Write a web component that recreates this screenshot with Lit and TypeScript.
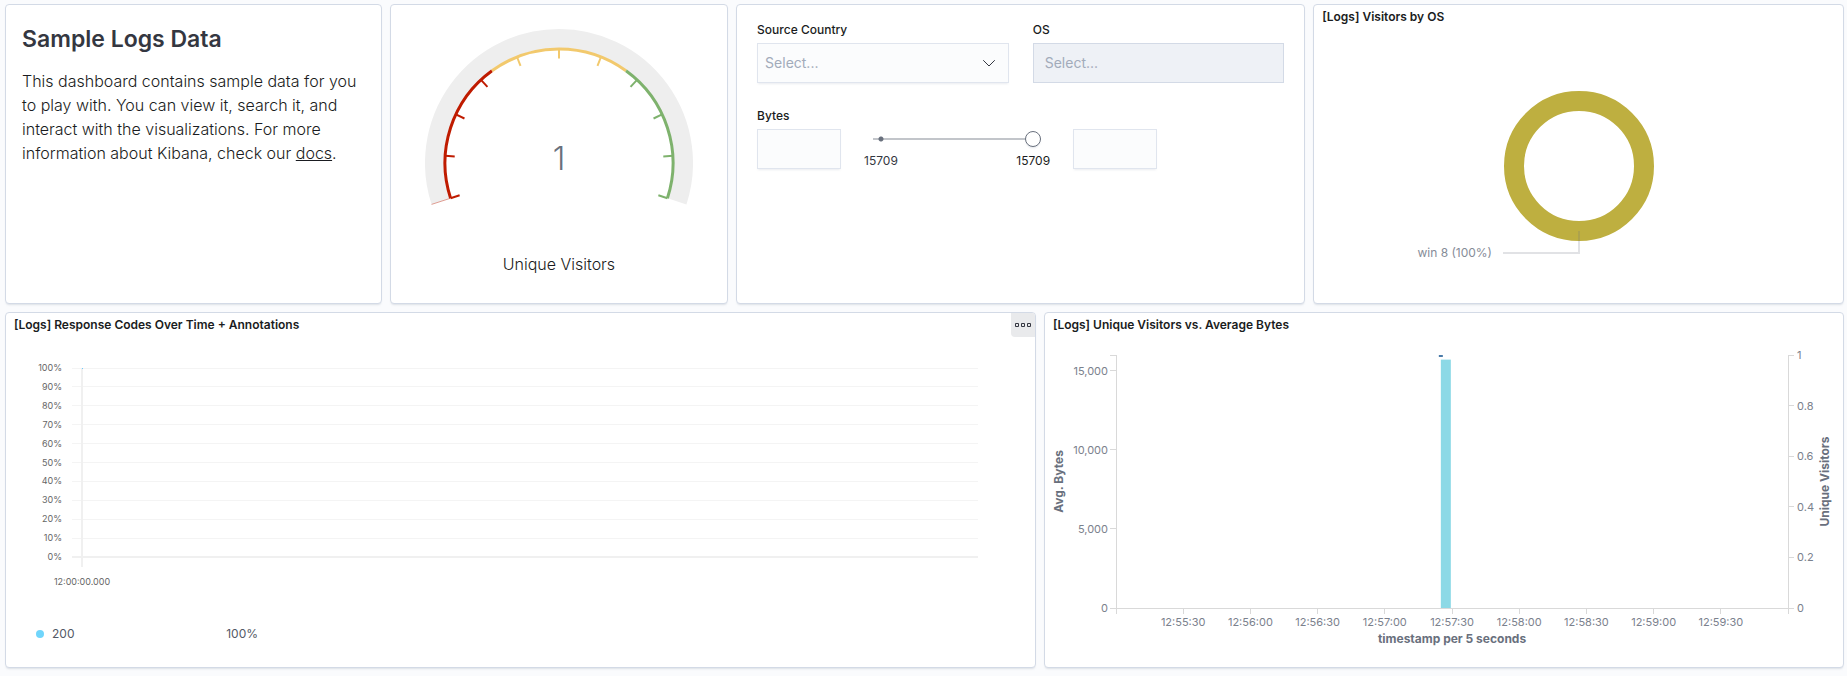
import { LitElement, html, svg, css } from "lit";
import { customElement, property } from "lit/decorators.js";

const polar = (r: number, deg: number): [number, number] => {
  const a = (deg * Math.PI) / 180;
  return [r * Math.cos(a), r * Math.sin(a)];
};

const arc = (r: number, from: number, to: number): string => {
  const [x1, y1] = polar(r, from);
  const [x2, y2] = polar(r, to);
  return `M${x1} ${y1}A${r} ${r} 0 ${to - from > 180 ? 1 : 0} 1 ${x2} ${y2}`;
};

@customElement("dash-panel")
export class DashPanel extends LitElement {
  @property() heading = "";
  @property({ type: Boolean }) menu = false;

  static styles = css`
    :host {
      display: flex;
      flex-direction: column;
      box-sizing: border-box;
      min-width: 0;
      overflow: hidden;
      background: #fff;
      border: 1px solid #d3dae6;
      border-radius: 4px;
      box-shadow: 0 2px 2px -1px rgba(152, 162, 179, 0.3);
    }
    .bar {
      display: flex;
      justify-content: space-between;
      height: 24px;
    }
    .title {
      margin: 0;
      padding-left: 8px;
      font-size: 12px;
      line-height: 24px;
      font-weight: 600;
      color: #1a1c21;
    }
    .menu {
      display: flex;
      align-items: center;
      justify-content: center;
      width: 24px;
      height: 24px;
      padding: 0;
      border: 0;
      border-radius: 0 0 0 4px;
      background: #e9eaec;
      color: #343741;
    }
  `;

  render() {
    return html`
      ${this.heading
        ? html`<header class="bar">
            <h2 class="title">${this.heading}</h2>
            ${this.menu
              ? html`<button class="menu" aria-label="Panel options">
                  <svg width="16" height="16" fill="none" stroke="currentColor">
                    <path d="M.5 6.5h3v3h-3zM6.5 6.5h3v3h-3zM12.5 6.5h3v3h-3z" />
                  </svg>
                </button>`
              : null}
          </header>`
        : null}
      <slot></slot>
    `;
  }
}

@customElement("visitor-gauge")
export class VisitorGauge extends LitElement {
  static styles = css`
    :host {
      display: flex;
      flex-direction: column;
      align-items: center;
      padding-top: 24px;
    }
    .value {
      font-size: 32px;
      font-weight: 300;
      fill: #69707d;
    }
    .label {
      margin-top: 43px;
      font-size: 16px;
      line-height: 24px;
      font-weight: 300;
      color: #1a1c21;
    }
  `;

  render() {
    const start = 162;
    const sweep = 216;
    const colors = ["#bf1b00", "#f2c96d", "#7eb26d"];
    const band = sweep / 3;
    const ticks = Array.from({ length: 11 }, (_, i) => i);
    const [ax, ay] = polar(115, start);
    const [bx, by] = polar(134, start);
    return html`
      <svg width="268" height="180" viewBox="-134 -134 268 180" role="img" aria-label="Unique Visitors gauge">
        <path d=${arc(124.5, start, start + sweep)} fill="none" stroke="#eee" stroke-width="19" />
        <path d="M${ax} ${ay}L${bx} ${by}" stroke="#bf1b00" stroke-width="1" opacity="0.4" />
        ${colors.map(
          (c, i) => svg`<path d=${arc(114, start + i * band, start + (i + 1) * band)} fill="none" stroke=${c} stroke-width="3" />`
        )}
        ${ticks.map((i) => {
          const deg = start + (i * sweep) / 10;
          const [x1, y1] = polar(114, deg);
          const [x2, y2] = polar(104.5, deg);
          return svg`<path d="M${x1} ${y1}L${x2} ${y2}" stroke=${colors[Math.min(2, Math.floor(i / 3.34))]} stroke-width="2" />`;
        })}
        <text class="value" x="0" y="7" text-anchor="middle">1</text>
      </svg>
      <div class="label">Unique Visitors</div>
    `;
  }
}

@customElement("input-controls")
export class InputControls extends LitElement {
  static styles = css`
    :host {
      display: grid;
      grid-template-columns: minmax(0, 1fr) minmax(0, 1fr);
      column-gap: 24px;
      row-gap: 24px;
      padding: 16px 20px;
    }
    .label {
      display: block;
      padding-bottom: 4px;
      font-size: 12px;
      line-height: 18px;
      font-weight: 500;
      color: #1a1c21;
    }
    .combo {
      display: grid;
      align-items: center;
    }
    .combo > * {
      grid-area: 1 / 1;
    }
    .select,
    .number {
      box-sizing: border-box;
      width: 100%;
      height: 40px;
      margin: 0;
      border: 1px solid #e0e5ee;
      border-radius: 0;
      background: #fbfcfd;
      box-shadow: 0 2px 2px -1px rgba(152, 162, 179, 0.2);
      appearance: none;
      font: 400 14px/20px Inter, sans-serif;
      color: #a2abba;
    }
    .select {
      padding: 0 32px 0 7px;
    }
    .select:disabled {
      padding-left: 11px;
      border-color: #d3dae6;
      background: #eef1f6;
      box-shadow: none;
      opacity: 1;
    }
    .chevron {
      justify-self: end;
      margin-right: 12px;
      pointer-events: none;
    }
    .bytes {
      grid-column: 1 / -1;
    }
    .range {
      display: flex;
      gap: 32px;
      width: 400px;
      max-width: 100%;
    }
    .number {
      flex: 0 0 84px;
      width: 84px;
    }
    .slider {
      flex: 1;
      min-width: 0;
    }
    .track {
      display: block;
      width: 100%;
      height: 20px;
      margin: 0;
      appearance: none;
      background:
        radial-gradient(circle at 8px 10px, #69707d 2px, transparent 3px),
        linear-gradient(#c2c5ca, #c2c5ca) center / 100% 2px no-repeat;
    }
    .track::-webkit-slider-thumb {
      appearance: none;
      box-sizing: border-box;
      width: 16px;
      height: 16px;
      border: 1px solid #69707d;
      border-radius: 50%;
      background: #fff;
      box-shadow: 0 2px 2px -1px rgba(152, 162, 179, 0.3);
    }
    .bounds {
      display: flex;
      justify-content: space-between;
      margin: 4px -9px 0;
      font-size: 12px;
      line-height: 16px;
      color: #343741;
    }
    .max {
      color: #1a1c21;
    }
  `;

  render() {
    return html`
      <div>
        <label class="label" for="country">Source Country</label>
        <div class="combo">
          <select class="select" id="country"><option>Select...</option></select>
          <svg class="chevron" width="16" height="16" fill="none" stroke="#343741" stroke-linecap="round" stroke-linejoin="round">
            <path d="M2.5 5.5l5.5 5.5 5.5-5.5" />
          </svg>
        </div>
      </div>
      <div>
        <label class="label" for="os">OS</label>
        <div class="combo">
          <select class="select" id="os" disabled><option>Select...</option></select>
        </div>
      </div>
      <div class="bytes">
        <label class="label" for="bytes">Bytes</label>
        <div class="range">
          <input class="number" type="text" aria-label="Minimum bytes" />
          <div class="slider">
            <input class="track" id="bytes" type="range" min="0" max="15709" .value=${"15709"} />
            <div class="bounds"><span>15709</span><span class="max">15709</span></div>
          </div>
          <input class="number" type="text" aria-label="Maximum bytes" />
        </div>
      </div>
    `;
  }
}

@customElement("os-donut")
export class OsDonut extends LitElement {
  static styles = css`
    :host {
      display: flex;
      justify-content: center;
      padding-top: 57px;
    }
    .name {
      font-size: 12px;
      font-weight: 400;
      fill: #868c98;
    }
  `;

  render() {
    return html`
      <svg width="360" height="180" viewBox="-180 -80 360 180" role="img" aria-label="Visitors by OS">
        <circle r="65" fill="none" stroke="#beaf40" stroke-width="20" />
        <path d="M0 65V87H-76" fill="none" stroke="#69707d" stroke-width="2" opacity="0.2" />
        <text class="name" x="-87" y="91" text-anchor="end">win 8 (100%)</text>
      </svg>
    `;
  }
}

@customElement("response-chart")
export class ResponseChart extends LitElement {
  static styles = css`
    :host {
      display: block;
      padding: 31px 57px 24px 76px;
    }
    .plot {
      display: block;
      width: 100%;
      height: 189px;
      overflow: visible;
    }
    .grid {
      stroke: #f4f4f4;
      shape-rendering: crispEdges;
    }
    .axis {
      stroke: #f0f0f0;
      stroke-width: 2;
      shape-rendering: crispEdges;
    }
    .point {
      fill: #6dccff;
    }
    .tick {
      font-size: 9px;
      fill: #666;
    }
    .legend {
      display: flex;
      align-items: center;
      gap: 8px;
      width: 222px;
      margin: 68px 0 0 -46px;
      font-size: 12px;
      line-height: 18px;
      color: #535966;
    }
    .dot {
      width: 8px;
      height: 8px;
      border-radius: 50%;
      background: #70d5fb;
    }
    .share {
      margin-left: auto;
    }
  `;

  render() {
    const steps = Array.from({ length: 11 }, (_, i) => i * 10);
    return html`
      <svg class="plot" role="img" aria-label="Response codes over time">
        ${steps.map(
          (v) => svg`
            <line class=${v ? "grid" : "axis"} x1="-10" x2="100%" y1="${100 - v}%" y2="${100 - v}%" />
            <text class="tick" x="-20" y="${100 - v}%" dy="3" text-anchor="end">${v}%</text>`
        )}
        <svg y="100%" overflow="visible">
          <line class="axis" x1="0" x2="0" y1="-189" y2="10" />
          <text class="tick" x="0" y="28" text-anchor="middle">12:00:00.000</text>
        </svg>
        <rect class="point" width="1" height="1" />
      </svg>
      <div class="legend">
        <span class="dot"></span><span>200</span><span class="share">100%</span>
      </div>
    `;
  }
}

@customElement("bytes-chart")
export class BytesChart extends LitElement {
  static styles = css`
    :host {
      display: block;
      padding: 18px 55px 59px 71px;
    }
    .plot {
      display: block;
      width: 100%;
      height: 253px;
      overflow: visible;
    }
    .axis {
      stroke: #d9d9d9;
      shape-rendering: crispEdges;
    }
    .tick {
      font-size: 11px;
      fill: #7b818d;
    }
    .name {
      font-size: 12px;
      font-weight: 700;
      fill: #69707d;
    }
    .bar {
      fill: #8cd9e6;
    }
    .dash {
      fill: #4b7ba9;
    }
  `;

  render() {
    const bytes = [0, 5000, 10000, 15000];
    const visitors = [0, 0.2, 0.4, 0.6, 0.8, 1];
    const times = ["12:55:30", "12:56:00", "12:56:30", "12:57:00", "12:57:30", "12:58:00", "12:58:30", "12:59:00", "12:59:30"];
    const peak = (15709 / 16000) * 100;
    const slot = (29 / 60) * 100;
    return html`
      <svg class="plot" role="img" aria-label="Unique visitors and average bytes over time">
        <rect class="bar" x="${slot}%" y="${100 - peak}%" width="10" height="${peak}%" />
        <svg x="${slot}%" overflow="visible"><rect class="dash" x="-2" y="0" width="4" height="2" /></svg>
        <line class="axis" x1="-6" x2="0" y1="0" y2="0" />
        <line class="axis" x1="0" x2="0" y1="0" y2="100%" />
        <line class="axis" x1="100%" x2="100%" y1="0" y2="100%" />
        <line class="axis" x1="0" x2="100%" y1="100%" y2="100%" />
        ${bytes.map((v) => {
          const y = `${100 - (v / 16000) * 100}%`;
          return svg`
            <line class="axis" x1="-6" x2="0" y1=${y} y2=${y} />
            <text class="tick" x="-8" y=${y} dy="4" text-anchor="end">${v.toLocaleString("en-US")}</text>`;
        })}
        <svg x="100%" overflow="visible">
          ${visitors.map((v) => {
            const y = `${100 - v * 100}%`;
            return svg`
              <line class="axis" x1="0" x2="6" y1=${y} y2=${y} />
              <text class="tick" x="9" y=${y} dy="4">${v}</text>`;
          })}
          <svg y="50%" overflow="visible">
            <text class="name" transform="rotate(-90)" x="0" y="41" text-anchor="middle">Unique Visitors</text>
          </svg>
        </svg>
        <svg y="50%" overflow="visible">
          <text class="name" transform="rotate(-90)" x="0" y="-53" text-anchor="middle">Avg. Bytes</text>
        </svg>
        <svg y="100%" overflow="visible">
          <line class="axis" x1="0" x2="0" y1="0" y2="6" />
          <line class="axis" x1="100%" x2="100%" y1="0" y2="6" />
          ${times.map((t, i) => {
            const x = `${(i + 1) * 10}%`;
            return svg`
              <line class="axis" x1=${x} x2=${x} y1="0" y2="6" />
              <text class="tick" x=${x} y="18" text-anchor="middle">${t}</text>`;
          })}
          <text class="name" x="50%" y="35" text-anchor="middle">timestamp per 5 seconds</text>
        </svg>
      </svg>
    `;
  }
}

@customElement("app-root")
export class AppRoot extends LitElement {
  static styles = css`
    :host {
      display: block;
      box-sizing: border-box;
      min-height: 100vh;
      padding: 4px 3px 8px 5px;
      background: #fafbfd;
      font-family: Inter, sans-serif;
    }
    .grid {
      display: grid;
      grid-template-columns: repeat(48, minmax(0, 1fr));
      grid-template-rows: minmax(300px, auto) minmax(356px, auto);
      gap: 8px;
    }
    .intro {
      grid-column: span 10;
    }
    .gauge {
      grid-column: span 9;
    }
    .controls {
      grid-column: span 15;
    }
    .os {
      grid-column: span 14;
    }
    .codes {
      grid-column: span 27;
    }
    .bytes {
      grid-column: span 21;
    }
    .text {
      padding: 16px;
      font-size: 16px;
      line-height: 24px;
      font-weight: 300;
      color: #1a1c21;
    }
    .heading {
      margin: 0 0 12px;
      font-size: 23px;
      line-height: 36px;
      font-weight: 600;
      color: #343741;
    }
    .copy {
      margin: 0;
    }
    .link {
      color: inherit;
    }
  `;

  render() {
    return html`
      <main class="grid">
        <dash-panel class="intro">
          <div class="text">
            <h1 class="heading">Sample Logs Data</h1>
            <p class="copy">
              This dashboard contains sample data for you to play with. You can view it, search it, and interact with the
              visualizations. For more information about Kibana, check our <a class="link" href="#docs">docs</a>.
            </p>
          </div>
        </dash-panel>
        <dash-panel class="gauge"><visitor-gauge></visitor-gauge></dash-panel>
        <dash-panel class="controls"><input-controls></input-controls></dash-panel>
        <dash-panel class="os" heading="[Logs] Visitors by OS"><os-donut></os-donut></dash-panel>
        <dash-panel class="codes" heading="[Logs] Response Codes Over Time + Annotations" menu>
          <response-chart></response-chart>
        </dash-panel>
        <dash-panel class="bytes" heading="[Logs] Unique Visitors vs. Average Bytes"><bytes-chart></bytes-chart></dash-panel>
      </main>
    `;
  }
}
